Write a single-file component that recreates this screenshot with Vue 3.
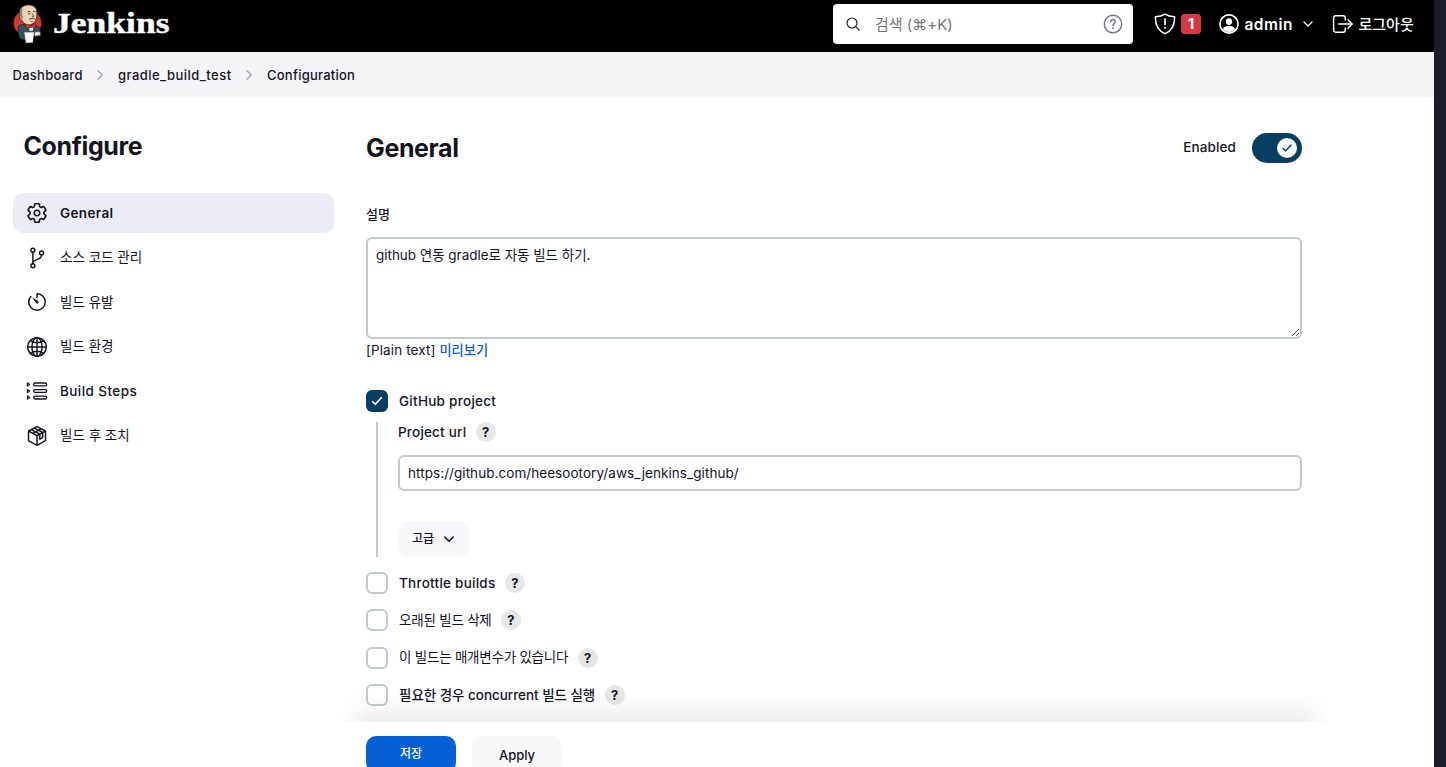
<script setup>
import { ref } from 'vue'

const crumbs = [
  { label: 'Dashboard', cls: 'c1' },
  { label: 'gradle_build_test', cls: 'c2' },
  { label: 'Configuration', cls: 'c3' },
]
const tasks = [
  { icon: 'gear', label: 'General' },
  { icon: 'branch', label: '소스 코드 관리' },
  { icon: 'timer', label: '빌드 유발' },
  { icon: 'globe', label: '빌드 환경' },
  { icon: 'steps', label: 'Build Steps' },
  { icon: 'cube', label: '빌드 후 조치' },
]
const options = ['Throttle builds', '오래된 빌드 삭제', '이 빌드는 매개변수가 있습니다', '필요한 경우 concurrent 빌드 실행']
const description = ref('github 연동 gradle로 자동 빌드 하기.')
const projectUrl = ref('https://github.com/heesootory/aws_jenkins_github/')
</script>

<template>
  <div class="screen">
    <div class="page">
      <header class="top">
        <svg class="butler" width="34" height="44" viewBox="11 2 34 44">
          <ellipse cx="27.5" cy="23" rx="13.8" ry="13.2" fill="#d33833" />
          <path d="M18.5 26 Q21 24 25 24.5 L34 24.5 Q40 26 40.5 31 L40 36 L33 36 L31 41 L22 39.5 Q18.5 38 18 32Z" fill="#335061" stroke="#121a20" stroke-width=".7" />
          <path d="M19.5 14 Q19 5.6 28 4.8 Q37 5 37 13 L36.5 19 Q35 24 30 25 Q24 25.5 21.6 20 Q18.5 18.5 19.5 14Z" fill="#efd4b4" stroke="#2b2420" stroke-width=".8" />
          <path d="M19.8 13.5 Q19.4 9.5 22.5 7.5 L22 13.5 L23 18.5 L20.8 18.5Z" fill="#8d8178" />
          <path d="M27.5 12 Q29 10.9 30.5 11.8 M33 11.5 L35.6 11.7 M32.3 13.5 L33.8 16.5 L32 17 M28 13.8 L30.3 13.8 M29 19.2 Q32 17.6 35.5 19" fill="none" stroke="#4a3b32" stroke-width=".9" />
          <path d="M30 21.5 L33.5 21.3" stroke="#a55b45" stroke-width=".8" />
          <path d="M25.5 23.8 L30.6 25.6 L35.6 23.2 L35.4 28 L30.8 26.8 L26.5 28.8Z" fill="#d33833" stroke="#5d1210" stroke-width=".5" />
          <path d="M29 28 L33.4 27.6 L32.6 31 L29.6 30.8Z" fill="#dfe7ec" />
          <path d="M24.5 32.5 L34 32.3 L32.6 42.6 L26 42.8Z" fill="#fff" stroke="#cfcfcf" stroke-width=".4" />
          <path d="M34 33 Q36 30.5 40.3 32 L40.4 35.5 L35 36.2Z" fill="#e9e5e0" stroke="#353535" stroke-width=".6" />
        </svg>
        <svg class="wordmark" width="122" height="36" viewBox="0 0 122 36">
          <text x="1" y="27" textLength="116.5" lengthAdjust="spacingAndGlyphs">Jenkins</text>
        </svg>
        <div class="search">
          <svg width="16" height="16" viewBox="0 0 16 16" fill="none" stroke="#23232d" stroke-width="1.2" stroke-linecap="round"><circle cx="7" cy="7" r="5" /><path d="M10.7 10.7 14 14" /></svg>
          <span class="placeholder">검색 (⌘+K)</span>
          <svg class="shelp" width="20" height="20" viewBox="0 0 20 20" fill="none" stroke="#70708f" stroke-width="1.4" stroke-linecap="round"><circle cx="10" cy="10" r="8.7" /><path d="M7.7 7.8C7.8 4.7 12.4 4.9 12.3 7.7 12.2 9.7 10 9.6 10 11.6" /><circle cx="10" cy="14.2" r=".35" /></svg>
        </div>
        <svg class="shield" width="22" height="22" viewBox="0 0 22 22" fill="none" stroke="#fff" stroke-width="1.5" stroke-linejoin="round" stroke-linecap="round"><path d="M11 1.2C8.5 2.9 5 3.7 1.5 3.8 1 11.5 3.8 17.5 11 20.8 18.2 17.5 21 11.5 20.5 3.8 17 3.7 13.5 2.9 11 1.2Z" /><path d="M11 6.2V11.5" stroke-width="1.7" /><circle cx="11" cy="14.8" r=".4" /></svg>
        <span class="badge">1</span>
        <svg class="user" width="20" height="20" viewBox="0 0 20 20"><circle cx="10" cy="10" r="9.1" fill="none" stroke="#fff" stroke-width="1.6" /><ellipse cx="10" cy="7.6" rx="3.1" ry="3.4" fill="#fff" /><path d="M3.8 15C5 12.4 7.5 11.8 10 11.8S15 12.4 16.2 15C13.5 19 6.5 19 3.8 15Z" fill="#fff" /></svg>
        <b class="admin">admin</b>
        <svg class="chev" width="12" height="12" viewBox="0 0 12 12" fill="none" stroke="#fff" stroke-width="1.3" stroke-linecap="round" stroke-linejoin="round"><path d="M2 4 6 8 10 4" /></svg>
        <svg class="exit" width="22" height="20" viewBox="0 0 22 20" fill="none" stroke="#fff" stroke-width="1.4" stroke-linecap="round" stroke-linejoin="round"><path d="M13.2 6V3.8A2 2 0 0 0 11.2 1.8H3.6A2 2 0 0 0 1.6 3.8V16.2A2 2 0 0 0 3.6 18.2H11.2A2 2 0 0 0 13.2 16.2V14M6.8 10H20M16 5.7 20.2 10 16 14.3" /></svg>
        <span class="logout">로그아웃</span>
      </header>

      <nav class="crumbs">
        <template v-for="(c, i) in crumbs" :key="c.label">
          <svg v-if="i" class="sep" width="10" height="14" viewBox="0 0 10 14" fill="none" stroke="#a6a6b8" stroke-width="1.5" stroke-linecap="round" stroke-linejoin="round"><path d="M3 2.7 7.3 7 3 11.3" /></svg>
          <span :class="c.cls">{{ c.label }}</span>
        </template>
      </nav>

      <div class="body">
        <aside>
          <h1>Configure</h1>
          <div v-for="(t, i) in tasks" :key="t.label" class="task" :class="{ active: i === 0, latin: i === 4 }">
            <svg width="22" height="22" viewBox="0 0 512 512" fill="none" stroke="#14141f" stroke-width="34" stroke-linecap="round" stroke-linejoin="round">
              <template v-if="t.icon === 'gear'">
                <path stroke-width="38" d="M262.29 192.31a64 64 0 1057.4 57.4 64.13 64.13 0 00-57.4-57.4zM416.39 256a154.34 154.34 0 01-1.53 20.79l45.21 35.46a10.81 10.81 0 012.45 13.75l-42.77 74a10.81 10.81 0 01-13.14 4.59l-44.9-18.08a16.11 16.11 0 00-15.17 1.75A164.48 164.48 0 01325 400.8a15.94 15.94 0 00-8.82 12.14l-6.73 47.89a11.08 11.08 0 01-10.68 9.17h-85.54a11.11 11.11 0 01-10.69-8.87l-6.72-47.82a16.07 16.07 0 00-9-12.22 155.3 155.3 0 01-21.46-12.57 16 16 0 00-15.11-1.71l-44.89 18.07a10.81 10.81 0 01-13.14-4.58l-42.77-74a10.8 10.8 0 012.45-13.75l38.21-30a16.05 16.05 0 006-14.08c-.36-4.17-.58-8.33-.58-12.5s.21-8.27.58-12.35a16 16 0 00-6.07-13.94l-38.19-30A10.81 10.81 0 0149.48 186l42.77-74a10.81 10.81 0 0113.14-4.59l44.9 18.08a16.11 16.11 0 0015.17-1.75A164.48 164.48 0 01187 111.2a15.94 15.94 0 008.82-12.14l6.73-47.89A11.08 11.08 0 01213.23 42h85.54a11.11 11.11 0 0110.69 8.87l6.72 47.82a16.07 16.07 0 009 12.22 155.3 155.3 0 0121.46 12.57 16 16 0 0015.11 1.71l44.89-18.07a10.81 10.81 0 0113.14 4.58l42.77 74a10.8 10.8 0 01-2.45 13.75l-38.21 30a16.05 16.05 0 00-6.05 14.08c.33 4.14.55 8.3.55 12.47z" />
              </template>
              <template v-else-if="t.icon === 'branch'">
                <circle cx="160" cy="76" r="46" /><circle cx="160" cy="436" r="46" /><circle cx="362" cy="140" r="46" />
                <path d="M160 390V122M362 186c0 138-202 66-202 204" />
              </template>
              <template v-else-if="t.icon === 'timer'">
                <path d="M112 128A192 192 0 0064 254c-1 106 86 194 192 194 106 0 192-86 192-192 0-105-84-190-187-192a5 5 0 00-5 5V152" />
                <path d="M233.38 278.63l-79-113a8.13 8.13 0 0111.32-11.32l113 79a32.5 32.5 0 01-37.25 53.26 33.21 33.21 0 01-8.07-7.94z" fill="#14141f" stroke="none" />
              </template>
              <template v-else-if="t.icon === 'globe'">
                <circle cx="256" cy="256" r="218" /><ellipse cx="256" cy="256" rx="118" ry="218" />
                <path d="M256 38v436M474 256H38M110 115c40 28 91 42 146 42s106-14 146-42M402 397c-40-28-91-42-146-42s-106 14-146 42" />
              </template>
              <template v-else-if="t.icon === 'steps'">
                <g v-for="y in [104, 256, 408]" :key="y" stroke-width="30"><path :d="`M34 ${y - 36}v72l50-36z`" /><rect x="178" :y="y - 34" width="304" height="68" rx="32" /></g>
              </template>
              <template v-else>
                <path d="M256 40 454 140V364L256 472 58 364V140ZM58 140 256 246 454 140M256 246V472M124 106 322 211V330L388 296V173L190 73M157 193 355 90" />
              </template>
            </svg>
            <span>{{ t.label }}</span>
          </div>
        </aside>

        <main>
          <div class="title">
            <h2>General</h2>
            <span class="enabled">Enabled</span>
            <span class="toggle"><span class="knob"><svg width="12" height="12" viewBox="0 0 12 12" fill="none" stroke="#053f61" stroke-width="1.4" stroke-linecap="round" stroke-linejoin="round"><path d="M2 6.6 4.5 9 10 3" /></svg></span></span>
          </div>
          <div class="desc-label">설명</div>
          <textarea v-model="description"></textarea>
          <div class="preview"><span>[Plain text]</span> <a>미리보기</a></div>

          <div class="check first">
            <span class="box on"><svg width="12" height="12" viewBox="0 0 12 12" fill="none" stroke="#fff" stroke-width="1.6" stroke-linecap="round" stroke-linejoin="round"><path d="M1.7 6.7 4.3 9.3 10.3 2.7" /></svg></span>
            <span class="gh">GitHub project</span>
          </div>
          <section class="nested">
            <div class="url-label"><span>Project url</span><i class="help">?</i></div>
            <input v-model="projectUrl" type="text" />
            <button class="advanced">고급<svg width="12" height="12" viewBox="0 0 12 12" fill="none" stroke="#14141f" stroke-width="1.6" stroke-linecap="round" stroke-linejoin="round"><path d="M1.8 4 6 8.2 10.2 4" /></svg></button>
          </section>
          <div v-for="(o, i) in options" :key="o" class="check option">
            <span class="box"></span><span :class="'o' + i">{{ o }}</span><i class="help">?</i>
          </div>
        </main>
      </div>

      <footer class="bar">
        <div class="shade"></div>
        <button class="save">저장</button>
        <button class="apply">Apply</button>
      </footer>
    </div>
  </div>
</template>

<style>
body { margin: 0; overflow: hidden; }
</style>

<style scoped>
* { box-sizing: border-box; }
.screen { width: 1446px; height: 767px; background: #1c1d2b; overflow: hidden; font: 500 13.5px/20px Inter, "Noto Sans CJK KR", "DejaVu Sans", sans-serif; color: #14141f; }
.page { position: relative; width: 1434px; height: 767px; background: #fff; overflow: hidden; }
svg { display: block; flex: none; }
span, b { white-space: nowrap; }
.top { height: 52px; background: #000; display: flex; align-items: center; padding: 0 0 4px 11px; color: #fff; }
.wordmark { margin-left: 7px; margin-right: 659px; }
.wordmark text { font: bold 30px "Liberation Serif", serif; fill: #fff; stroke: #fff; stroke-width: .4px; }
.search { width: 300px; height: 40px; flex: none; background: #fff; border-radius: 4px; display: flex; align-items: center; padding: 0 10px 0 12px; }
.placeholder { color: #757575; font-size: 15px; font-weight: 400; margin-left: 14px; padding-top: 1px; }
.shelp { margin-left: auto; }
.shield { margin-left: 21px; }
.badge { width: 20px; height: 20px; margin-left: 5px; border-radius: 4px; background: #dc3545; font-weight: 700; font-size: 15px; text-align: center; flex: none; }
.user { margin-left: 18px; }
.admin { width: 50px; margin-left: 5.5px; font-size: 15.5px; font-weight: 600; letter-spacing: .45px; padding-top: 1px; }
.chev { margin-left: 7.5px; }
.exit { margin-left: 18px; }
.logout { margin-left: 4.5px; font-size: 15px; padding-top: 1px; }
.crumbs { height: 45px; background: #f5f5f8; display: flex; align-items: center; padding-left: 12.5px; font-size: 13px; }
.sep { margin: 0 13px 0 12px; }
.c1 { width: 70.5px; letter-spacing: .27px; }
.c2 { width: 114px; letter-spacing: .46px; }
.c3 { letter-spacing: .24px; }
.body { display: flex; }
aside { width: 334px; padding: 34px 0 0 13px; flex: none; }
h1, h2 { margin: 0; font-size: 25px; line-height: 30px; font-weight: 700; letter-spacing: -.38px; }
h1 { padding-left: 10.5px; margin-bottom: 32px; }
.task { height: 40px; margin-bottom: 4.5px; border-radius: 10px; display: flex; align-items: center; padding-left: 13px; gap: 12px; }
.task span { font-weight: 400; font-size: 13.5px; padding-bottom: 1px; }
.task.active { background: #ececf6; }
.task.active span { font-weight: 600; letter-spacing: .38px; padding: 0; }
.task.latin span { font-weight: 500; letter-spacing: .42px; padding-bottom: 0; }
main { width: 936px; margin-left: 32px; padding-top: 35px; }
.title { display: flex; align-items: center; height: 31px; }
.enabled { margin-left: auto; margin-right: 16px; letter-spacing: .12px; padding-bottom: 1px; }
.toggle { width: 50px; height: 30px; border-radius: 15px; background: #053f61; padding: 5px; display: flex; justify-content: flex-end; }
.knob { width: 20px; height: 20px; border-radius: 50%; background: #fff; display: grid; place-items: center; }
.desc-label { margin-top: 41px; height: 33px; font-size: 13px; }
textarea, input { display: block; font: 400 13.5px/20px Inter, "Noto Sans CJK KR", sans-serif; color: #14141f; border: 2px solid #c0cacd; border-radius: 6px; background: #fff; outline: 0; padding: 6px 8px; }
textarea { width: 936px; height: 102px; resize: vertical; letter-spacing: -.03px; }
.preview { height: 22px; padding-top: 1px; font-weight: 400; letter-spacing: .1px; }
.preview a { color: #0b5fd2; font-weight: 500; font-size: 13.2px; }
.check { display: flex; align-items: center; height: 22px; }
.first { margin-top: 29px; }
.gh { letter-spacing: .27px; }
.box { width: 22px; height: 22px; border: 2px solid #c0cacd; border-radius: 6px; margin-right: 11px; display: grid; place-items: center; flex: none; }
.box.on { background: #053f61; border: 0; }
.help { width: 20px; height: 20px; border-radius: 50%; background: #e7e7e8; margin-left: 9.4px; font: 700 13px/20px Inter, sans-serif; letter-spacing: 0; text-align: center; flex: none; }
.nested { margin: 10px 0 0 10px; border-left: 2px solid #c0cacd; padding-left: 20px; height: 135px; }
.url-label { display: flex; align-items: center; height: 20px; letter-spacing: .2px; }
input { width: 904px; height: 36px; margin-top: 13px; letter-spacing: .06px; }
button { font: 500 13px/20px Inter, "Noto Sans CJK KR", sans-serif; color: #14141f; border: 0; border-radius: 10px; background: #f8f8fa; padding: 0; }
.advanced { width: 71px; height: 36px; margin-top: 30px; display: flex; align-items: center; justify-content: center; gap: 9px; font-size: 12px; }
.option { margin-top: 15.2px; }
.o0 { letter-spacing: .25px; }
.o1 { letter-spacing: -.22px; font-weight: 400; }
.o2 { letter-spacing: -.23px; font-weight: 400; padding-bottom: 1px; }
.o3 { letter-spacing: -.04px; }
.bar { position: absolute; left: 334px; right: 0; bottom: 0; height: 45px; background: #fff; padding: 14px 0 0 32px; display: flex; gap: 16px; }
.bar button { width: 90px; height: 36px; flex: none; }
.bar .save { background: #0460d4; color: #fff; font-size: 12px; }
.bar .apply { letter-spacing: -.05px; padding-top: 1px; }
.shade { position: absolute; left: 4px; top: -30px; width: 994px; height: 30px; background: linear-gradient(transparent, rgba(0, 0, 0, .055)); mask-image: linear-gradient(90deg, transparent, #000 30px, #000 964px, transparent); }
</style>
